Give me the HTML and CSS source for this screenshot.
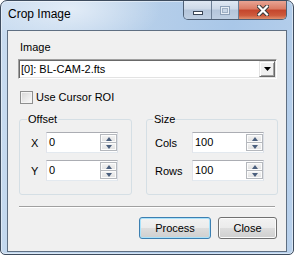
FILE: index.html
```html
<!DOCTYPE html>
<html lang="en">
<head>
	<meta charset="UTF-8">
	<title>Crop Image</title>
	<link rel="stylesheet" href="styles.css">
</head>
<body>
	<div class="window">
		<div class="titlebar">
			<span class="title">Crop Image</span>
			<div class="caption">
				<div class="cap cap-min"><span class="glyph-min"></span></div>
				<div class="cap cap-max"><span class="glyph-max"></span></div>
				<div class="cap cap-close">
					<svg width="12" height="11" viewBox="0 0 12 11">
						<path d="M2 1.5 L10 9.5 M10 1.5 L2 9.5" stroke="#3b3b3b" stroke-width="4.2" stroke-linecap="square" fill="none"/>
						<path d="M2 1.5 L10 9.5 M10 1.5 L2 9.5" stroke="#fff" stroke-width="2.2" stroke-linecap="square" fill="none"/>
					</svg>
				</div>
			</div>
		</div>

		<div class="client">
			<span class="field-label">Image</span>
			<div class="combo">
				<span class="combo-text">[0]: BL-CAM-2.fts</span>
				<div class="combo-btn">
					<svg width="7" height="4" viewBox="0 0 7 4"><path d="M0 0 H7 L3.5 4 Z" fill="#000"/></svg>
				</div>
			</div>

			<label class="check"><span class="check-box"></span>Use Cursor ROI</label>

			<div class="groups">
				<fieldset class="group group-offset">
					<legend>Offset</legend>
					<div class="spin-row">
						<span class="spin-label">X</span>
						<div class="spin">
							<span class="spin-value">0</span>
							<div class="spin-btns">
								<div class="spin-btn"><span class="arrow-up"></span></div>
								<div class="spin-btn"><span class="arrow-down"></span></div>
							</div>
						</div>
					</div>
					<div class="spin-row">
						<span class="spin-label">Y</span>
						<div class="spin">
							<span class="spin-value">0</span>
							<div class="spin-btns">
								<div class="spin-btn"><span class="arrow-up"></span></div>
								<div class="spin-btn"><span class="arrow-down"></span></div>
							</div>
						</div>
					</div>
				</fieldset>

				<fieldset class="group group-size">
					<legend>Size</legend>
					<div class="spin-row">
						<span class="spin-label">Cols</span>
						<div class="spin">
							<span class="spin-value">100</span>
							<div class="spin-btns">
								<div class="spin-btn"><span class="arrow-up"></span></div>
								<div class="spin-btn"><span class="arrow-down"></span></div>
							</div>
						</div>
					</div>
					<div class="spin-row">
						<span class="spin-label">Rows</span>
						<div class="spin">
							<span class="spin-value">100</span>
							<div class="spin-btns">
								<div class="spin-btn"><span class="arrow-up"></span></div>
								<div class="spin-btn"><span class="arrow-down"></span></div>
							</div>
						</div>
					</div>
				</fieldset>
			</div>

			<div class="separator"></div>

			<div class="actions">
				<button class="btn btn-default btn-process">Process</button>
				<button class="btn btn-close">Close</button>
			</div>
		</div>
	</div>
</body>
</html>
```

FILE: styles.css
```css
* {
	box-sizing: border-box;
}
body {
	margin: 0;
	background: #fff;
	color: #000;
	font-family: "Liberation Sans", Arial, sans-serif;
	font-size: 11px;
}

/* window frame */
.window {
	width: 294px;
	height: 255px;
	display: flex;
	flex-direction: column;
	padding: 0 6px 2px;
	border: 1px solid #3e4c5e;
	border-radius: 7px 7px 5px 5px;
	background:
		radial-gradient(ellipse 90px 40px at 70px 8px, rgba(255,255,255,.55), rgba(255,255,255,0)),
		linear-gradient(100deg, #c9dcf0 0%, #b8d0ea 40%, #a9c7e8 70%, #b9d1ec 100%);
	box-shadow: inset 0 0 0 1px rgba(255,255,255,.45);
}
.titlebar {
	height: 29px;
	display: flex;
	align-items: flex-start;
	flex: none;
}
.title {
	margin: 6px 0 0 1px;
	font-size: 12px;
	line-height: 15px;
	color: #000;
}
.caption {
	margin-left: auto;
	display: flex;
	height: 19px;
	border: 1px solid #4f6075;
	border-top: none;
	border-radius: 0 0 5px 5px;
	overflow: hidden;
}
.cap {
	height: 100%;
	display: flex;
	align-items: center;
	justify-content: center;
}
.cap-min,
.cap-max {
	background: linear-gradient(#dfe8f3 0%, #cdd9e8 45%, #b4c5da 50%, #bfcfe2 100%);
	border-right: 1px solid #6d7f95;
}
.cap-min {
	width: 28px;
}
.cap-max {
	width: 27px;
}
.cap-close {
	width: 47px;
	background: linear-gradient(#e8a494 0%, #da7a63 45%, #c4452c 50%, #cd5a3c 80%, #e0906e 100%);
}
.glyph-min {
	width: 10px;
	height: 4px;
	margin-top: 6px;
	background: #fff;
	border: 1px solid #3b4656;
}
.glyph-max {
	width: 10px;
	height: 9px;
	border: 1px solid #8da0b7;
	background: #c9d6e6;
	box-shadow: inset 0 0 0 1px #e6edf5, inset 0 0 0 2px #9fb0c4;
}

/* client area */
.client {
	flex: 1;
	display: flex;
	flex-direction: column;
	padding: 10px 9px 0 10px;
	background: #f0f0f0;
	border: 1px solid #5f6f82;
}
.field-label {
	margin-left: 2px;
	line-height: 13px;
}
.combo {
	margin-top: 5px;
	height: 20px;
	display: flex;
	align-items: stretch;
	background: #fff;
	border: 1px solid;
	border-color: #a0a0a0 #fff #fff #a0a0a0;
	box-shadow: inset 1px 1px 0 #696969, inset -1px -1px 0 #e3e3e3;
}
.combo-text {
	flex: 1;
	padding: 2px 0 0 2px;
	line-height: 14px;
}
.combo-btn {
	width: 16px;
	margin: 1px 1px 1px 0;
	display: flex;
	align-items: center;
	justify-content: center;
	background: #f0f0f0;
	border: 1px solid;
	border-color: #e3e3e3 #696969 #696969 #e3e3e3;
	box-shadow: inset 1px 1px 0 #fff, inset -1px -1px 0 #a0a0a0;
}
.check {
	margin: 12px 0 0 2px;
	display: flex;
	align-items: center;
	height: 13px;
	line-height: 13px;
}
.check-box {
	width: 13px;
	height: 13px;
	margin-right: 3px;
	border: 1px solid #8e8f8f;
	background: linear-gradient(135deg, #d6d6d6, #fbfbfb);
	box-shadow: inset 0 0 0 1px #f4f4f4;
}

/* group boxes */
.groups {
	display: flex;
	gap: 14px;
	margin: 9px 0 0 1px;
}
.group {
	flex: none;
	margin: 0;
	padding: 6px 0 13px;
	border: 1px solid #d5dfe5;
	border-radius: 3px;
	display: flex;
	flex-direction: column;
	gap: 7px;
}
.group legend {
	padding: 0 1px;
	line-height: 13px;
}
.group-offset {
	width: 113px;
	padding-left: 11px;
}
.group-offset legend {
	margin-left: -4px;
}
.group-size {
	width: 132px;
	padding-left: 8px;
}
.group-size legend {
	margin-left: -2px;
}
.spin-row {
	display: flex;
	align-items: center;
}
.group-offset .spin-label {
	width: 15px;
}
.group-size .spin-label {
	width: 37px;
}
.spin {
	width: 72px;
	height: 21px;
	display: flex;
	background: #fff;
	border: 1px solid;
	border-color: #abadb3 #dbdfe6 #e3e9ef #e2e3ea;
}
.spin-value {
	flex: 1;
	padding: 3px 0 0 2px;
	line-height: 13px;
}
.spin-btns {
	width: 17px;
	display: flex;
	flex-direction: column;
	margin: 1px 0 1px 0;
}
.spin-btn {
	flex: 1;
	display: flex;
	align-items: center;
	justify-content: center;
	border: 1px solid #b5b8bd;
	background: linear-gradient(#f4f4f4, #e1e1e1);
	box-shadow: inset 0 0 0 1px #fcfcfc;
}
.spin-btn + .spin-btn {
	border-top: none;
}
.arrow-up {
	width: 0;
	height: 0;
	border-left: 3.5px solid transparent;
	border-right: 3.5px solid transparent;
	border-bottom: 4px solid #4b5f7d;
}
.arrow-down {
	width: 0;
	height: 0;
	border-left: 3.5px solid transparent;
	border-right: 3.5px solid transparent;
	border-top: 4px solid #4b5f7d;
}

/* footer */
.separator {
	margin: 11px 0 0 1px;
	width: 256px;
	height: 2px;
	border-top: 1px solid #a0a0a0;
	border-bottom: 1px solid #fff;
}
.actions {
	margin-top: 9px;
	display: flex;
	justify-content: flex-end;
	gap: 7px;
}
.btn {
	height: 22px;
	padding: 0;
	font-family: "Liberation Sans", Arial, sans-serif;
	font-size: 11px;
	color: #000;
	border: 1px solid #707070;
	border-radius: 3px;
	background: linear-gradient(#f2f2f2 0%, #ebebeb 50%, #dddddd 50%, #cfcfcf 100%);
	box-shadow: inset 0 0 0 1px #fbfbfb;
}
.btn-default {
	border-color: #3c7fb1;
	box-shadow: inset 0 0 0 1px #a9e2fb;
}
.btn-process {
	width: 72px;
}
.btn-close {
	width: 59px;
}
```
